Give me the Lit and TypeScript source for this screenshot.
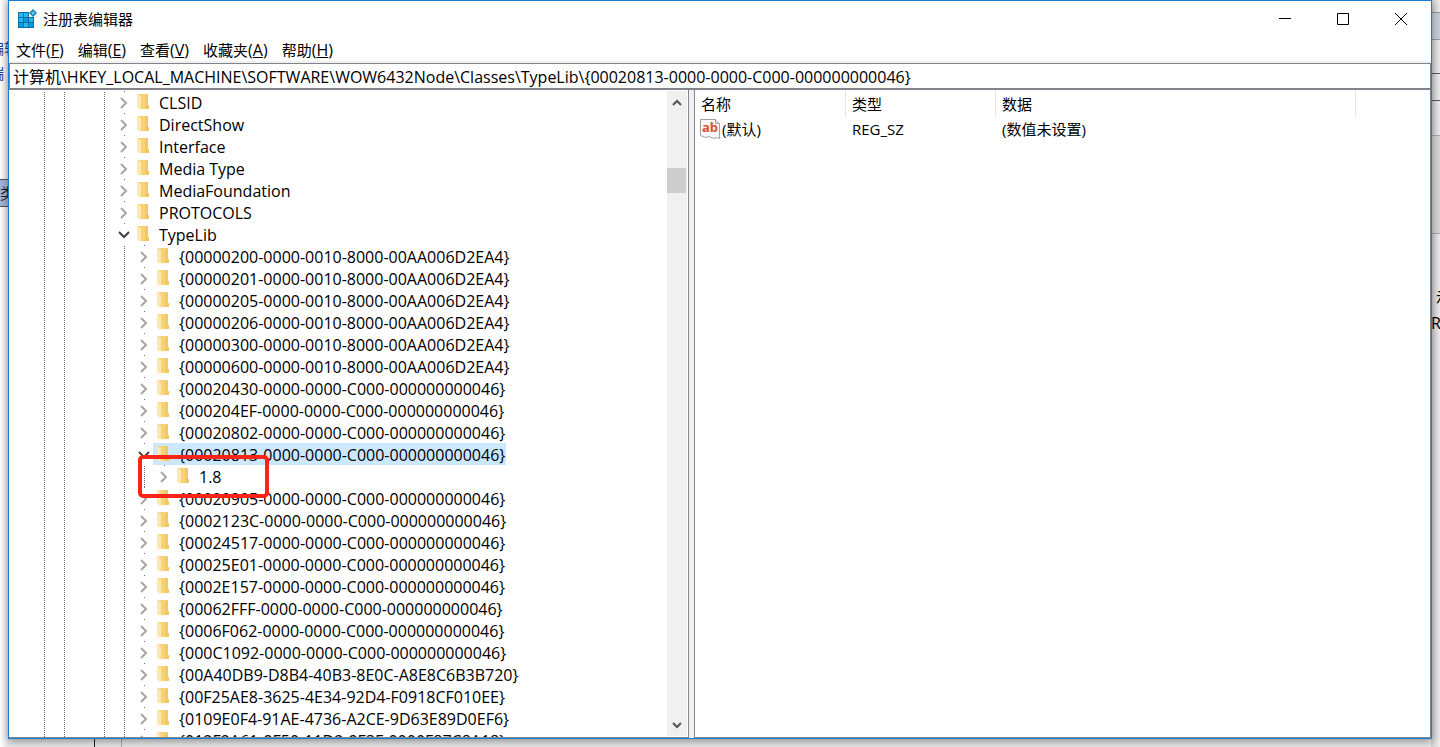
import { LitElement, html, css, svg } from "lit";
import { customElement, property } from "lit/decorators.js";

type Item = { name: string; level: number; open?: boolean; selected?: boolean };

const top = ["CLSID", "DirectShow", "Interface", "Media Type", "MediaFoundation", "PROTOCOLS"];
const before = [
  "{00000200-0000-0010-8000-00AA006D2EA4}",
  "{00000201-0000-0010-8000-00AA006D2EA4}",
  "{00000205-0000-0010-8000-00AA006D2EA4}",
  "{00000206-0000-0010-8000-00AA006D2EA4}",
  "{00000300-0000-0010-8000-00AA006D2EA4}",
  "{00000600-0000-0010-8000-00AA006D2EA4}",
  "{00020430-0000-0000-C000-000000000046}",
  "{000204EF-0000-0000-C000-000000000046}",
  "{00020802-0000-0000-C000-000000000046}",
];
const after = [
  "{00020905-0000-0000-C000-000000000046}",
  "{0002123C-0000-0000-C000-000000000046}",
  "{00024517-0000-0000-C000-000000000046}",
  "{00025E01-0000-0000-C000-000000000046}",
  "{0002E157-0000-0000-C000-000000000046}",
  "{00062FFF-0000-0000-C000-000000000046}",
  "{0006F062-0000-0000-C000-000000000046}",
  "{000C1092-0000-0000-C000-000000000046}",
  "{00A40DB9-D8B4-40B3-8E0C-A8E8C6B3B720}",
  "{00F25AE8-3625-4E34-92D4-F0918CF010EE}",
  "{0109E0F4-91AE-4736-A2CE-9D63E89D0EF6}",
  "{012F2A61-9F50-11D2-9F3F-0000F87C8A18}",
];
const items: Item[] = [
  ...top.map((name) => ({ name, level: 0 })),
  { name: "TypeLib", level: 0, open: true },
  ...before.map((name) => ({ name, level: 1 })),
  { name: "{00020813-0000-0000-C000-000000000046}", level: 1, open: true, selected: true },
  { name: "1.8", level: 2 },
  ...after.map((name) => ({ name, level: 1 })),
];

const chevronRight = svg`<path d="M3 3l5 5-5 5" fill="none" stroke="#a6a6a6" stroke-width="2"/>`;
const chevronDown = svg`<path d="M1 5l5 5 5-5" fill="none" stroke="#404040" stroke-width="2"/>`;

@customElement("tree-row")
class TreeRow extends LitElement {
  @property({ attribute: false }) item!: Item;

  static styles = css`
    :host { display: block; flex: none; }
    .row { display: flex; height: 22px; padding-left: 24px; }
    .cell { width: 20px; flex: none; display: flex; justify-content: center; }
    .guide::before {
      content: "";
      width: 1px;
      background: repeating-linear-gradient(#fff 0 1px, #6e6e6e 1px 2px);
    }
    .toggle {
      width: 20px; flex: none; padding: 0; border: 0; display: flex;
      align-items: center; justify-content: center;
      background: linear-gradient(#6e6e6e, #6e6e6e) 50% 0 / 1px 1px no-repeat;
    }
    .name {
      display: flex; align-items: center; padding: 0 0 0 4px; gap: 7px; margin-left: -1px;
      font: 16px/20px "Open Sans", "Noto Sans CJK SC", sans-serif; white-space: nowrap;
      color: #000; text-decoration: none;
    }
    .selected { background: #cce8ff; }
    .folder { flex: none; }
    .label { padding: 2px 1px 0 2px; }
  `;

  render() {
    const { name, level, open, selected } = this.item;
    const guides = [true, true, false, true, ...Array(level).fill(true)];
    return html`<div class="row">
      ${guides.map((g) => html`<span class="cell ${g ? "guide" : ""}"></span>`)}
      <button class="toggle" aria-label="${name}">
        <svg width="12" height="14" viewBox="0 0 12 14">${open ? chevronDown : chevronRight}</svg>
      </button>
      <a class="name ${selected ? "selected" : ""}" href="#">
        <svg class="folder" width="13" height="18" viewBox="0 0 13 18">
          <path d="M1 1h10v11h1v4H3z" fill="#f6d379" />
          <path d="M8 1h3v11h1v4H8z" fill="#f0c965" />
          <path d="M0 1l4 2v14l-4-2z" fill="#ffe9a9" />
        </svg>
        <span class="label">${name}</span>
      </a>
    </div>`;
  }
}

@customElement("app-root")
class AppRoot extends LitElement {
  static styles = css`
    * { box-sizing: border-box; }
    :host {
      display: block; position: relative; height: 100vh; overflow: hidden; background: #e6e6e6;
      font: 15px/20px "Open Sans", "Noto Sans CJK SC", sans-serif; color: #000;
    }
    .desk { position: absolute; inset: 0; display: flex; justify-content: space-between; }
    .side { width: 9px; display: flex; flex-direction: column; overflow: hidden; white-space: nowrap; }
    .left { background: linear-gradient(90deg, #fff, #e2e2e2); color: #1e3f8a; }
    .left .word { margin-left: -11px; height: 20px; flex: none; }
    .left .gap { height: 38px; flex: none; }
    .left .gap2 { height: 5px; flex: none; }
    .left .gap3 { height: 96px; flex: none; }
    .left .pick { height: 28px; flex: none; border: 1px solid #555; border-width: 1px 0; background: #a3b4d6; color: #222; line-height: 26px; }
    .right { background: linear-gradient(90deg, #cfcfcf, #ececec); }
    .right .a { height: 13px; flex: none; border-bottom: 1px solid #999; }
    .right .b { height: 27px; flex: none; background: #c5ced8; border-bottom: 1px solid #999; }
    .right .c { height: 34px; flex: none; border-bottom: 1px solid #555; }
    .right .d { height: 27px; flex: none; border-bottom: 1px solid #555; }
    .right .e { height: 35px; flex: none; border-bottom: 1px solid #aaa; }
    .right .f { height: 98px; flex: none; background: #d5d5d3; border-bottom: 1px solid #aaa; }
    .right .g { padding: 53px 0 0 5px; }
    .right .h { padding-top: 6px; font-size: 16px; }
    .foot { position: absolute; left: 94px; bottom: 0; width: 28px; height: 8px; border: 1px solid #222; border-width: 0 1px; border-right-color: #aaa; }
    .window {
      position: relative; margin: 0 8px; height: calc(100vh - 8px); display: flex; flex-direction: column;
      border: 1px solid #1a7fd4; background: #fff; box-shadow: 0 2px 8px #0006;
    }
    .title { display: flex; align-items: center; height: 36px; padding: 0 1px 0 8px; flex: none; }
    .title h1 { font: inherit; margin: 0 0 0 6px; flex: 1; }
    .caption { border: 0; background: none; width: 58px; height: 36px; padding: 0; display: flex; align-items: center; justify-content: center; }
    .menu { display: flex; gap: 14px; padding: 1px 7px 0; height: 24px; flex: none; }
    .menu button { border: 0; padding: 0; background: none; font: inherit; color: inherit; }
    .latin { font-size: 16px; }
    .address {
      display: block; width: 100%; height: 27px; border: 1px solid #82828a; border-bottom-width: 2px;
      padding: 0 3px 1px; flex: none; font: 16px/20px "Open Sans", "Noto Sans CJK SC", sans-serif; color: #000;
      background: #fff; outline: 0;
    }
    .strip { height: 2px; background: #f0f0f0; flex: none; }
    .body { flex: 1; min-height: 0; display: flex; background: #f0f0f0; }
    .tree { width: 680px; flex: none; display: flex; border: 1px solid #82878f; border-width: 0 1px 1px 0; background: #fff; }
    .rows { flex: 1; min-width: 0; overflow: hidden; display: flex; flex-direction: column; padding: 1px 0 0 1px; }
    .scroll { width: 20px; margin: 1px 1px 1px 0; background: #f0f0f0; display: flex; flex-direction: column; align-items: stretch; flex: none; }
    .arrow { border: 0; background: none; height: 23px; padding: 0; display: flex; align-items: center; justify-content: center; flex: none; }
    .track { flex: 1; padding-top: 54px; }
    .thumb { height: 25px; background: #cdcdcd; margin-right: 1px; }
    .list { flex: 1; min-width: 0; margin-left: 5px; border: 1px solid #82878f; border-top: 0; background: #fff; }
    .values { border-collapse: separate; border-spacing: 0; table-layout: fixed; width: 661px; }
    .values th { height: 27px; padding: 0 0 0 6px; text-align: left; font-weight: 400; border-right: 1px solid #e5e5e5; }
    .values td { height: 24px; padding: 0 0 0 6px; }
    .values .key { padding-left: 5px; }
    .c1 { width: 151px; } .c2 { width: 150px; } .c3 { width: 360px; }
    .keybox { display: flex; align-items: center; gap: 2px; }
    .ab { font: bold 13px "Open Sans", sans-serif; fill: #dc4e2b; }
    .mark { position: absolute; left: 129px; top: 454px; width: 131px; height: 43px; border: 4px solid #fc2416; border-radius: 5px; pointer-events: none; }
  `;

  render() {
    const menus = [["文件", "F"], ["编辑", "E"], ["查看", "V"], ["收藏夹", "A"], ["帮助", "H"]];
    return html`
      <div class="desk" aria-hidden="true">
        <div class="side left">
          <div class="gap"></div><div class="word">编辑</div><div class="gap2"></div>
          <div class="word">端</div><div class="gap3"></div><div class="pick">类</div>
        </div>
        <div class="side right">
          <div class="a"></div><div class="b"></div><div class="c"></div><div class="d"></div>
          <div class="e"></div><div class="f"></div><div class="g">示</div><div class="h">R</div>
        </div>
        <div class="foot"></div>
      </div>
      <main class="window">
        <header class="title">
          <svg width="20" height="20" viewBox="0 0 20 20">
            <path d="M1 3h11v5h5v11H1z" fill="#0b6ea5" />
            <g fill="#25b7ee">
              <path d="M2 4h4v4H2zM7 4h4v4H7zM2 9h4v4H2zM12 9h4v4h-4zM7 14h4v4H7z" />
              <path d="M7 9h4v4H7zM2 14h4v4H2zM12 14h4v4h-4z" fill="#079cda" />
            </g>
            <path d="M16 0l4 4-4 4-4-4z" fill="#1682b5" /><path d="M16 2l2 2-2 2-2-2z" fill="#65c7ea" />
          </svg>
          <h1>注册表编辑器</h1>
          <button class="caption" aria-label="最小化"><svg width="12" height="12"><path d="M0 5.500h12" stroke="#000" /></svg></button>
          <button class="caption" aria-label="最大化"><svg width="12" height="12"><path d="M.5.5h11v11H.5z" fill="none" stroke="#000" /></svg></button>
          <button class="caption" aria-label="关闭"><svg width="12" height="12"><path d="M0 0l12 12M12 0L0 12" stroke="#000" /></svg></button>
        </header>
        <nav class="menu">${menus.map(([t, k]) => html`<button>${t}<span class="latin">(<u>${k}</u>)</span></button>`)}</nav>
        <div class="strip"></div>
        <input class="address" aria-label="地址" value="计算机\\HKEY_LOCAL_MACHINE\\SOFTWARE\\WOW6432Node\\Classes\\TypeLib\\{00020813-0000-0000-C000-000000000046}" />
        <div class="body">
          <section class="tree">
            <div class="rows">${items.map((item) => html`<tree-row .item=${item}></tree-row>`)}</div>
            <div class="scroll">
              <button class="arrow" aria-label="向上"><svg width="12" height="12"><path d="M2 8l4-4 4 4" fill="none" stroke="#555" stroke-width="2" /></svg></button>
              <div class="track"><div class="thumb"></div></div>
              <button class="arrow" aria-label="向下"><svg width="12" height="12"><path d="M2 4l4 4 4-4" fill="none" stroke="#555" stroke-width="2" /></svg></button>
            </div>
          </section>
          <section class="list">
            <table class="values">
              <thead><tr><th class="c1">名称</th><th class="c2">类型</th><th class="c3">数据</th></tr></thead>
              <tbody><tr>
                <td class="key"><span class="keybox">
                  <svg width="20" height="20" viewBox="0 0 20 20">
                    <path d="M.5.5h15l4 4v15l-3-1-3 1-4-2-4 1-5-2z" fill="#f7f7f7" stroke="#a0a0a0" />
                    <path d="M15.500.5v4h4" fill="#ddd" stroke="#a0a0a0" />
                    <text class="ab" x="2" y="13">ab</text>
                  </svg>(默认)</span></td>
                <td>REG_SZ</td><td>(数值未设置)</td>
              </tr></tbody>
            </table>
          </section>
        </div>
        <div class="mark"></div>
      </main>`;
  }
}
